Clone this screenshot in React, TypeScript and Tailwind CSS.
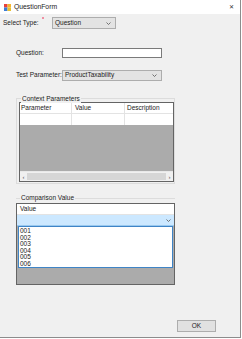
import React from 'react';

const font = { fontFamily: '"Liberation Sans Narrow", "Liberation Sans", Arial, sans-serif' };

function Chevron() {
  return (
    <svg width="5" height="3" viewBox="0 0 5 3" className="shrink-0">
      <path d="M0.5 0.5 L2.5 2.5 L4.5 0.5" fill="none" stroke="#555" strokeWidth="0.8" />
    </svg>
  );
}

function FormIcon() {
  return (
    <svg width="7" height="7" viewBox="0 0 7 7" className="shrink-0">
      <rect x="0" y="0" width="3.5" height="3.5" fill="#e8413a" />
      <rect x="3.5" y="0" width="3.5" height="3.5" fill="#f5b52e" />
      <rect x="0" y="3.5" width="3.5" height="3.5" fill="#3b7dd8" />
      <rect x="3.5" y="3.5" width="3.5" height="3.5" fill="#e8c02e" />
    </svg>
  );
}

function ComboBox({ text, width }: { text: string; width: string }) {
  return (
    <div className={`${width} h-full flex items-center justify-between bg-[#e3e3e3] border border-[#adadad] pl-[2px] pr-[4px]`}>
      <span>{text}</span>
      <Chevron />
    </div>
  );
}

export default function App() {
  return (
    <div className="w-[242px] h-[339px] bg-white text-[6.5px] leading-none text-[#1a1a1a]" style={font}>
      <div className="w-[241px] h-[338px] bg-[#f0f0f0] border-r border-b border-[#8c8c8c] flex flex-col">
        {/* Title bar */}
        <div className="h-[14px] bg-white flex items-center pl-[4px] pr-[6px]">
          <FormIcon />
          <span className="ml-[3px] text-[6.8px]">QuestionForm</span>
          <span className="ml-auto text-[6px] text-[#333]">✕</span>
        </div>

        {/* Select Type */}
        <div className="mt-[3px] h-[12px] flex items-center">
          <span className="w-[39px] pl-[3px]">Select Type:</span>
          <span className="self-start w-[2px] h-[2px] ml-[3px] rounded-full bg-[#f0708a]" />
          <div className="ml-[8px] h-full">
            <ComboBox text="Question" width="w-[64px]" />
          </div>
        </div>

        {/* Question */}
        <div className="mt-[19px] h-[10px] flex items-center">
          <span className="w-[62px] pl-[16px]">Question:</span>
          <div className="w-[100px] h-full bg-white border border-[#7a7a7a]" />
        </div>

        {/* Test Parameter */}
        <div className="mt-[12px] h-[11px] flex items-center">
          <span className="w-[62px] pl-[16px]">Test Parameter:</span>
          <div className="h-full">
            <ComboBox text="ProductTaxability" width="w-[100px]" />
          </div>
        </div>

        {/* Context Parameters */}
        <div className="relative mt-[17px] ml-[16px] w-[159px] h-[86px] border border-[#dcdcdc] pl-[2px] pt-[3px]">
          <span className="absolute -top-[3px] left-[4px] px-[1px] bg-[#f0f0f0]">Context Parameters</span>
          <div className="w-[155px] h-[80px] border border-[#646464] bg-[#ababab] flex flex-col">
            <div className="h-[11px] flex bg-white border-b border-[#e3e3e3]">
              <div className="w-[52px] pl-[1px] flex items-center border-r border-[#e3e3e3]">Parameter</div>
              <div className="w-[53px] pl-[3px] flex items-center border-r border-[#e3e3e3]">Value</div>
              <div className="flex-1 pl-[2px] flex items-center">Description</div>
            </div>
            <div className="h-[11px] flex bg-white">
              <div className="w-[52px] border-r border-[#e3e3e3]" />
              <div className="w-[53px] border-r border-[#e3e3e3]" />
              <div className="flex-1" />
            </div>
            <div className="flex-1" />
            <div className="h-[10px] flex items-center bg-[#f0f0f0] border-t border-[#e8e8e8]">
              <span className="w-[7px] text-center text-[6px] text-[#555]">‹</span>
              <div className="flex-1 h-[7px] bg-[#d6d6d6]" />
              <span className="w-[7px] text-center text-[6px] text-[#555]">›</span>
            </div>
          </div>
        </div>

        {/* Comparison Value */}
        <div className="relative mt-[14px] ml-[16px] w-[159px] border-t border-[#dcdcdc]">
          <span className="absolute -top-[4px] left-[4px] px-[1px] bg-[#f0f0f0]">Comparison Value</span>
          <div className="mt-[4px] w-[159px] h-[82px] border border-[#646464] bg-[#ababab] flex flex-col">
            <div className="h-[11px] flex items-center pl-[3px] bg-white border-b border-[#e3e3e3]">Value</div>
            <div className="h-[11px] flex items-center justify-end pr-[3px] bg-[#cce8ff] border-b border-[#99c9ef]">
              <Chevron />
            </div>
            <div className="h-[42px] mx-[1px] bg-white border border-[#3f84c6] flex flex-col pt-[1px]">
              {['001', '002', '003', '004', '005', '006'].map(v => (
                <div key={v} className="h-[6.6px] flex items-center pl-[1px]">
                  {v}
                </div>
              ))}
            </div>
            <div className="flex-1" />
          </div>
        </div>

        {/* OK */}
        <div className="mt-[35px] ml-[177px] w-[39px] h-[12px] flex items-center justify-center bg-[#e1e1e1] border border-[#adadad]">
          OK
        </div>
      </div>
    </div>
  );
}
